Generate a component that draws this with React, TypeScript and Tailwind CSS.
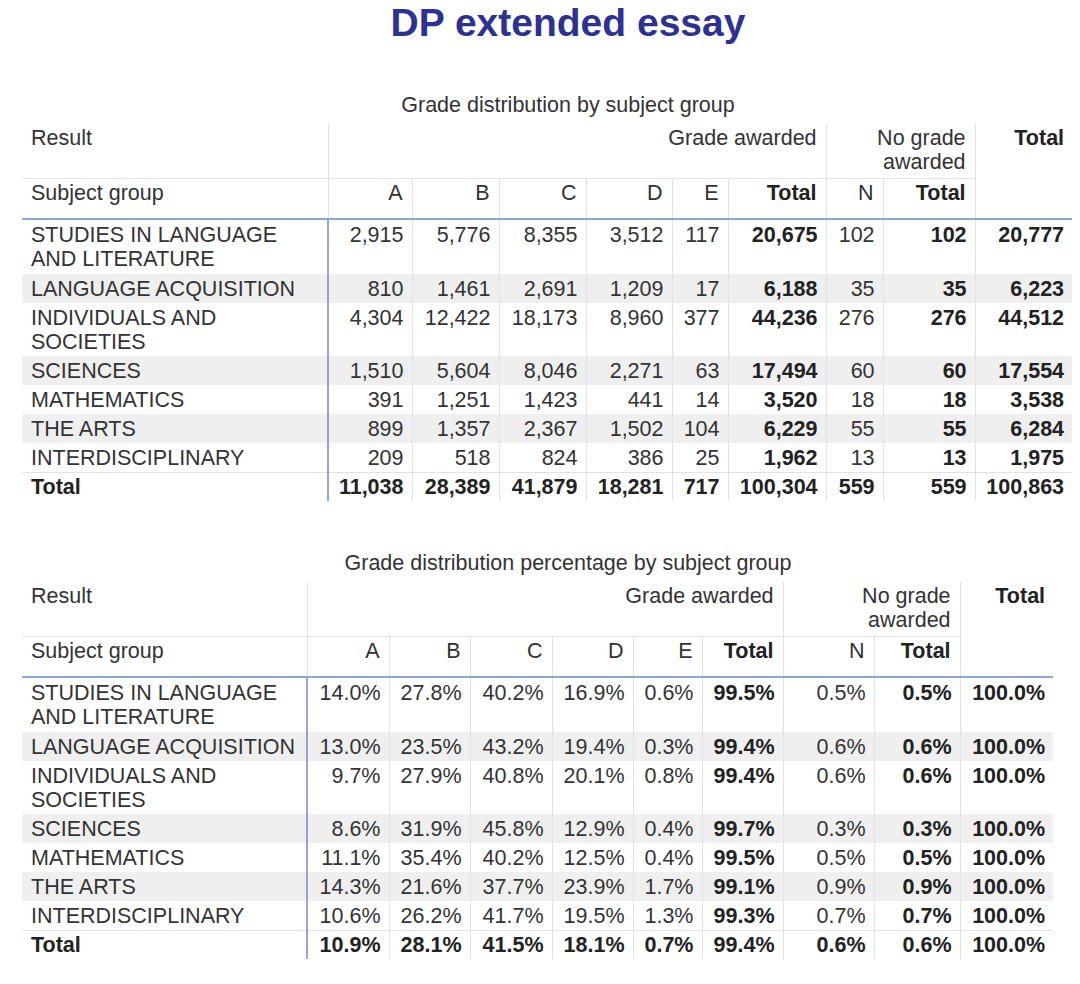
import React from "react"

type Row = { name: React.ReactNode; values: string[]; tall?: boolean }

const counts: Row[] = [
  { name: <>STUDIES IN LANGUAGE<br />AND LITERATURE</>, values: ["2,915", "5,776", "8,355", "3,512", "117", "20,675", "102", "102", "20,777"], tall: true },
  { name: "LANGUAGE ACQUISITION", values: ["810", "1,461", "2,691", "1,209", "17", "6,188", "35", "35", "6,223"] },
  { name: <>INDIVIDUALS AND<br />SOCIETIES</>, values: ["4,304", "12,422", "18,173", "8,960", "377", "44,236", "276", "276", "44,512"], tall: true },
  { name: "SCIENCES", values: ["1,510", "5,604", "8,046", "2,271", "63", "17,494", "60", "60", "17,554"] },
  { name: "MATHEMATICS", values: ["391", "1,251", "1,423", "441", "14", "3,520", "18", "18", "3,538"] },
  { name: "THE ARTS", values: ["899", "1,357", "2,367", "1,502", "104", "6,229", "55", "55", "6,284"] },
  { name: "INTERDISCIPLINARY", values: ["209", "518", "824", "386", "25", "1,962", "13", "13", "1,975"] },
]
const countTotal = ["11,038", "28,389", "41,879", "18,281", "717", "100,304", "559", "559", "100,863"]

const percents: Row[] = [
  { name: <>STUDIES IN LANGUAGE<br />AND LITERATURE</>, values: ["14.0%", "27.8%", "40.2%", "16.9%", "0.6%", "99.5%", "0.5%", "0.5%", "100.0%"], tall: true },
  { name: "LANGUAGE ACQUISITION", values: ["13.0%", "23.5%", "43.2%", "19.4%", "0.3%", "99.4%", "0.6%", "0.6%", "100.0%"] },
  { name: <>INDIVIDUALS AND<br />SOCIETIES</>, values: ["9.7%", "27.9%", "40.8%", "20.1%", "0.8%", "99.4%", "0.6%", "0.6%", "100.0%"], tall: true },
  { name: "SCIENCES", values: ["8.6%", "31.9%", "45.8%", "12.9%", "0.4%", "99.7%", "0.3%", "0.3%", "100.0%"] },
  { name: "MATHEMATICS", values: ["11.1%", "35.4%", "40.2%", "12.5%", "0.4%", "99.5%", "0.5%", "0.5%", "100.0%"] },
  { name: "THE ARTS", values: ["14.3%", "21.6%", "37.7%", "23.9%", "1.7%", "99.1%", "0.9%", "0.9%", "100.0%"] },
  { name: "INTERDISCIPLINARY", values: ["10.6%", "26.2%", "41.7%", "19.5%", "1.3%", "99.3%", "0.7%", "0.7%", "100.0%"] },
]
const percentTotal = ["10.9%", "28.1%", "41.5%", "18.1%", "0.7%", "99.4%", "0.6%", "0.6%", "100.0%"]

// columns 5, 7 and 8 of the values are the bold totals
const boldCols = [5, 7, 8]

function GradeTable({ caption, widths, rows, total }: { caption: string; widths: number[]; rows: Row[]; total: string[] }) {
  const width = widths.reduce((a, b) => a + b, 0)
  return (
    <section>
      <div className="pl-[56px] text-center text-[21.5px] leading-[24px] text-[#333]">{caption}</div>
      <table className="ml-[22px] mt-[7px] table-fixed border-collapse text-[21.5px] leading-[24px] text-[#333]" style={{ width }}>
        <colgroup>
          {widths.map((w, i) => (
            <col key={i} style={{ width: w }} />
          ))}
        </colgroup>
        <thead>
          <tr className="h-[54px]">
            <th className="border-r border-b border-[#e2e2e2] pl-[9px] pt-[2px] text-left align-top font-normal">Result</th>
            <th colSpan={6} className="border-r border-b border-[#e2e2e2] pr-[9px] pt-[2px] text-right align-top font-normal">Grade awarded</th>
            <th colSpan={2} className="border-r border-b border-[#e2e2e2] pr-[9px] pt-[2px] text-right align-top font-normal">
              No grade
              <br />
              awarded
            </th>
            <th rowSpan={2} className="border-b-2 border-b-[#8ea8d8] pr-[8px] pt-[2px] text-right align-top font-bold text-[#222]">Total</th>
          </tr>
          <tr className="h-[41px]">
            <th className="border-r border-[#e2e2e2] border-b-2 border-b-[#8ea8d8] pl-[9px] pt-[2px] text-left align-top font-normal">Subject group</th>
            {["A", "B", "C", "D", "E", "Total", "N", "Total"].map((h, i) => (
              <th
                key={i}
                className={`border-r border-[#e2e2e2] border-b-2 border-b-[#8ea8d8] pr-[9px] pt-[2px] text-right align-top ${h === "Total" ? "font-bold text-[#222]" : "font-normal"}`}
              >
                {h}
              </th>
            ))}
          </tr>
        </thead>
        <tbody>
          {rows.map((r, ri) => (
            <tr
              key={ri}
              className={`${ri === 0 ? "h-[55px]" : r.tall ? "h-[53px]" : "h-[29px]"} ${ri % 2 === 1 ? "bg-[#efefef]" : ""}`}
            >
              <td className="border-r-2 border-r-[#8ea8d8] pl-[9px] pt-[3px] text-left align-top">{r.name}</td>
              {r.values.map((v, i) => (
                <td
                  key={i}
                  className={`pr-[8px] pt-[3px] text-right align-top ${i < 8 ? "border-r border-[#e2e2e2]" : ""} ${boldCols.includes(i) ? "font-bold text-[#222]" : ""}`}
                >
                  {v}
                </td>
              ))}
            </tr>
          ))}
          <tr className="h-[29px] border-t border-[#e2e2e2] font-bold text-[#222]">
            <td className="border-r-2 border-r-[#8ea8d8] pl-[9px] pt-[2px] text-left align-top">Total</td>
            {total.map((v, i) => (
              <td key={i} className={`pr-[8px] pt-[2px] text-right align-top ${i < 8 ? "border-r border-[#e2e2e2]" : ""}`}>
                {v}
              </td>
            ))}
          </tr>
        </tbody>
      </table>
    </section>
  )
}

export default function App() {
  return (
    <div className="h-[984px] w-[1080px] overflow-hidden bg-white font-['Liberation_Sans',Arial,sans-serif]">
      <h1 className="pl-[56px] text-center text-[39px] font-bold leading-[45px] text-[#2e3192]">DP extended essay</h1>
      <div className="mt-[48px]">
        <GradeTable
          caption="Grade distribution by subject group"
          widths={[306, 84, 87, 87, 86, 56, 98, 57, 92, 97]}
          rows={counts}
          total={countTotal}
        />
      </div>
      <div className="mt-[50px]">
        <GradeTable
          caption="Grade distribution percentage by subject group"
          widths={[285, 82, 81, 82, 81, 69, 81, 91, 86, 93]}
          rows={percents}
          total={percentTotal}
        />
      </div>
    </div>
  )
}
